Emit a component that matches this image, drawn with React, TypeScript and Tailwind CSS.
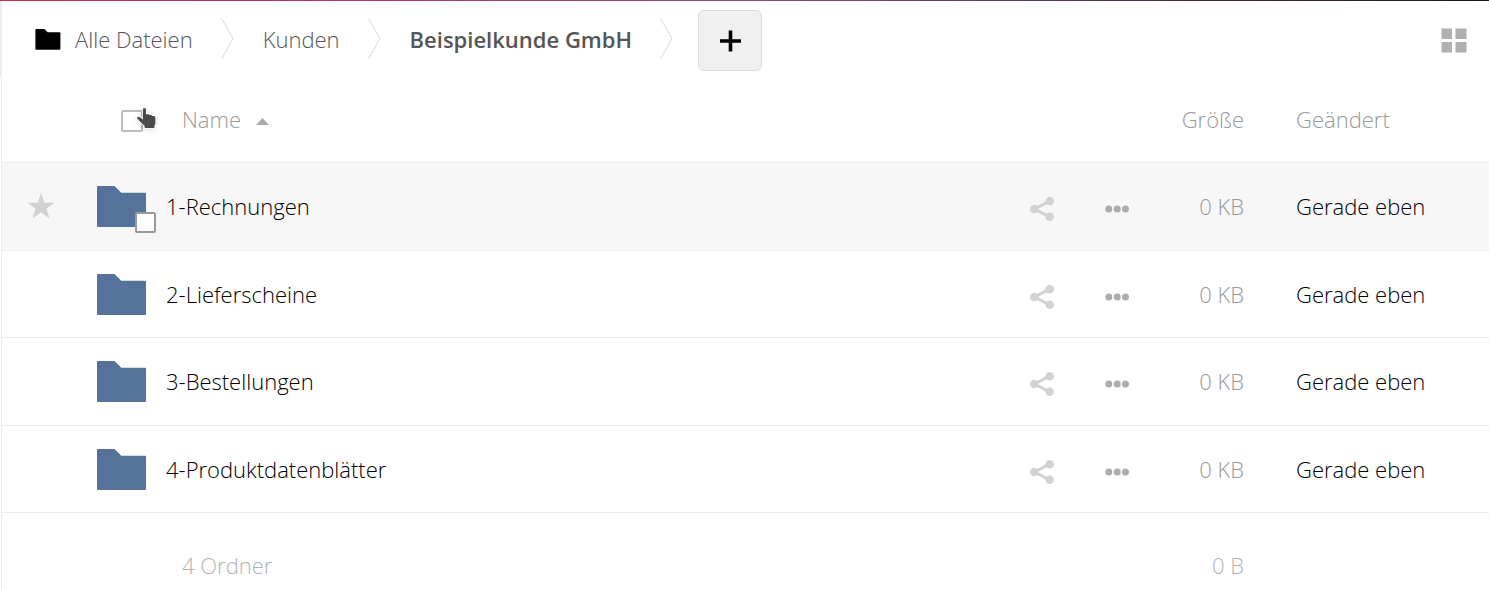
import React from "react";

const rows = ["1-Rechnungen", "2-Lieferscheine", "3-Bestellungen", "4-Produktdatenblätter"];

function Separator() {
  return (
    <svg className="h-[42px] w-[13px] shrink-0" viewBox="0 0 13 42" fill="none" stroke="#d8d8d8" aria-hidden="true">
      <path d="M0.5 0.5 L12 20.5 L0.5 41" />
    </svg>
  );
}

function FolderIcon() {
  return (
    <svg className="h-[42px] w-[49px]" viewBox="0 0 49 42" fill="#55739a" aria-hidden="true">
      <path d="M1 0H17.5L24.3 6.8H48a1 1 0 0 1 1 1V40a1 1 0 0 1-1 1H1a1 1 0 0 1-1-1V1a1 1 0 0 1 1-1Z" />
    </svg>
  );
}

function ShareIcon() {
  return (
    <svg className="h-6 w-6" viewBox="0 0 24 24" fill="#d2d2d2" aria-hidden="true">
      <path d="M4.3 12 L19.7 4.2 M4.3 12 L19.7 19.8" stroke="#d2d2d2" strokeWidth="3" />
      <circle cx="4.3" cy="12" r="4.3" />
      <circle cx="19.7" cy="4.3" r="4.3" />
      <circle cx="19.7" cy="19.7" r="4.3" />
    </svg>
  );
}

function MoreIcon() {
  return (
    <svg className="h-6 w-6" viewBox="0 0 24 24" fill="#acacac" aria-hidden="true">
      <circle cx="3.8" cy="12" r="3.5" />
      <circle cx="12.2" cy="12" r="3.5" />
      <circle cx="20.5" cy="12" r="3.5" />
    </svg>
  );
}

function HandPointer() {
  return (
    <svg
      className="pointer-events-none absolute top-[-3px] left-[15px] h-6 w-6 drop-shadow-sm"
      viewBox="0 0 24 24"
      fill="#4a4a4a"
      stroke="#fff"
      strokeWidth="1.6"
      paintOrder="stroke"
      aria-hidden="true"
    >
      <path d="M6.9 2.6Q6.9 1 8.4 1Q10 1 10 2.6V7.4L12 6.9L13.4 8L15 7.8L16.4 9L18 9Q19.4 9.6 19.4 11V16.8L18.4 18.8V21H8.7V19L5.2 15.8L1.4 11.8Q.6 10.6 1.6 9.9Q2.8 9.3 4.2 10.4L6.9 12.4Z" />
    </svg>
  );
}

export default function App() {
  return (
    <div className="bg-white font-['Open_Sans',sans-serif] text-[22px] leading-8 font-light text-black">
      <div className="h-px bg-linear-to-r/srgb from-[#d0294f] via-[#904a70] to-[#17171f]" />
      <div className="flex">
        <div className="h-[76px] w-px shrink-0 bg-[#e9edf2]" />
        <div className="min-w-0 flex-1 border-l border-[#ededed]">
          <header className="flex h-[76px] items-start justify-between pt-[9px] pr-[22px] pl-[33px]">
            <nav aria-label="Pfad" className="flex items-center text-[#555]">
              <div className="mb-1 flex items-center">
                <a href="#alle" className="flex items-center gap-[14px] pr-7">
                  <svg className="mt-[2px] h-[21px] w-[26px]" viewBox="0 0 26 21" fill="#000" aria-hidden="true">
                    <path d="M1.2 0H9.5L12.6 3.2H24.6a.8.8 0 0 1 .8.8V20a.8.8 0 0 1-.8.8H1.2a.8.8 0 0 1-.8-.8V.8a.8.8 0 0 1 .8-.8Z" />
                  </svg>
                  Alle Dateien
                </a>
                <Separator />
                <a href="#kunden" className="pr-7 pl-[29px]">Kunden</a>
                <Separator />
                <a href="#beispielkunde" className="pr-7 pl-[29px] font-semibold">Beispielkunde GmbH</a>
                <Separator />
              </div>
              <button
                type="button"
                aria-label="Neu"
                className="ml-[25px] flex h-[61px] w-16 items-center justify-center rounded-md border border-[#dcdcdc] bg-[#f0f0f0]"
              >
                <svg className="h-[22px] w-[22px]" viewBox="0 0 22 22" aria-hidden="true">
                  <path d="M11.5 .5V21.5M1 11H22" stroke="#000" strokeWidth="3.6" />
                </svg>
              </button>
            </nav>
            <button type="button" aria-label="Kachelansicht" className="mt-[18px]">
              <svg className="h-[25px] w-[26px]" viewBox="0 0 26 25" fill="#b0b0b0" aria-hidden="true">
                <path d="M.5.5H11V11H.5ZM14.5.5H25.5V11H14.5ZM.5 14H11V24.5H.5ZM14.5 14H25.5V24.5H14.5Z" />
              </svg>
            </button>
          </header>

          <table className="w-full table-fixed border-collapse">
            <colgroup>
              <col className="w-[78px]" />
              <col className="w-[86px]" />
              <col />
              <col className="w-[76px]" />
              <col className="w-[74px]" />
              <col className="w-[90px]" />
              <col className="w-[245px]" />
            </colgroup>
            <thead>
              <tr className="h-[85px] border-b border-[#ededed] text-[#999]">
                <td />
                <td className="pt-[3px] pl-[41px]">
                  <div className="relative flex w-[22px]">
                    <input
                      type="checkbox"
                      aria-label="Alle auswählen"
                      className="h-[22px] w-[22px] appearance-none rounded-xs border-2 border-[#bbb] bg-white"
                    />
                    <HandPointer />
                  </div>
                </td>
                <th scope="col" className="pl-4 text-left font-light">
                  <button type="button" className="flex items-center gap-[15px]">
                    Name
                    <svg className="mt-1 h-[7px] w-[13px]" viewBox="0 0 13 7" fill="#aaa" aria-hidden="true">
                      <path d="M6.5 0L13 7H0Z" />
                    </svg>
                  </button>
                </th>
                <td />
                <td />
                <th scope="col" className="text-right font-light">Größe</th>
                <th scope="col" className="pl-[52px] text-left font-light">Geändert</th>
              </tr>
            </thead>
            <tbody>
              {rows.map((name, i) => (
                <tr
                  key={name}
                  className={
                    i === 0
                      ? "h-[88px] border-b border-[#ededed] bg-[#f7f7f7]"
                      : "border-b border-[#ededed] odd:h-[88px] even:h-[87px]"
                  }
                >
                  <td>
                    {i === 0 && (
                      <button type="button" aria-label="Favorisieren" className="mx-auto block">
                        <svg className="h-[26px] w-7" viewBox="0 0 28 26" fill="#d2d2d2" aria-hidden="true">
                          <path d="M14 0L17.3 9.7H27.6L19.4 15.8L22.6 25.6L14 19.6L5.4 25.6L8.6 15.8L.4 9.7H10.7Z" />
                        </svg>
                      </button>
                    )}
                  </td>
                  <td className="pt-[2px] pl-[17px]">
                    <div className="relative w-[49px]">
                      <FolderIcon />
                      {i === 0 && (
                        <input
                          type="checkbox"
                          aria-label={name}
                          className="absolute top-[26px] left-[38px] h-[21px] w-[21px] appearance-none rounded-xs border-2 border-[#999] bg-white"
                        />
                      )}
                    </div>
                  </td>
                  <td>
                    <a href="#ordner">{name}</a>
                  </td>
                  <td className="pt-[6px]">
                    <button type="button" aria-label="Teilen" className="mx-auto block">
                      <ShareIcon />
                    </button>
                  </td>
                  <td className="pt-[6px]">
                    <button type="button" aria-label="Aktionen" className="mx-auto block">
                      <MoreIcon />
                    </button>
                  </td>
                  <td className="text-right text-[#999]">0 KB</td>
                  <td className="pl-[52px]">Gerade eben</td>
                </tr>
              ))}
            </tbody>
            <tfoot>
              <tr className="text-[#b3b3b3]">
                <td />
                <td />
                <td className="pt-9 pl-4">4 Ordner</td>
                <td />
                <td />
                <td className="pt-9 text-right">0 B</td>
                <td />
              </tr>
            </tfoot>
          </table>
          <div className="h-[9px]" />
        </div>
      </div>
    </div>
  );
}
